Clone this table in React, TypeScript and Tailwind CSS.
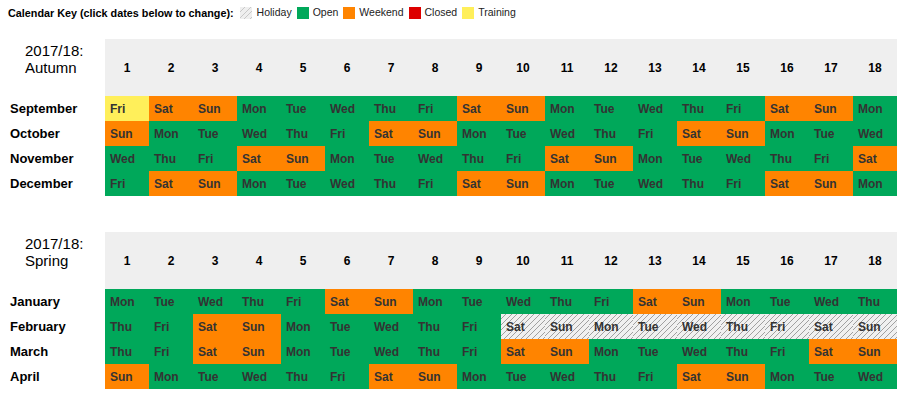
const DAYS = ['Sun', 'Mon', 'Tue', 'Wed', 'Thu', 'Fri', 'Sat']

type Status = 'open' | 'weekend' | 'holiday' | 'closed' | 'training'

const statusClass: Record<Status, string> = {
  open: 'bg-[#00a85a]',
  weekend: 'bg-[#ff8400]',
  closed: 'bg-[#dd0000]',
  training: 'bg-[#ffef5a]',
  holiday:
    'bg-[#f0f0f0] bg-[image:repeating-linear-gradient(135deg,#f0f0f0_0px,#f0f0f0_3.2px,#a0a0a0_3.2px,#a0a0a0_4px)]',
}

interface Term {
  title: string
  season: string
  months: { name: string; year: number; month: number }[]
}

const terms: Term[] = [
  {
    title: '2017/18:',
    season: 'Autumn',
    months: [
      { name: 'September', year: 2017, month: 8 },
      { name: 'October', year: 2017, month: 9 },
      { name: 'November', year: 2017, month: 10 },
      { name: 'December', year: 2017, month: 11 },
    ],
  },
  {
    title: '2017/18:',
    season: 'Spring',
    months: [
      { name: 'January', year: 2018, month: 0 },
      { name: 'February', year: 2018, month: 1 },
      { name: 'March', year: 2018, month: 2 },
      { name: 'April', year: 2018, month: 3 },
    ],
  },
]

const dates = Array.from({ length: 18 }, (_, i) => i + 1)

// a few hand-set days, the rest follow the weekday
const getStatus = (year: number, month: number, d: number): Status => {
  if (year === 2017 && month === 8 && d === 1) return 'training'
  if (year === 2018 && month === 1 && d >= 10) return 'holiday'
  const wd = new Date(year, month, d).getDay()
  return wd === 0 || wd === 6 ? 'weekend' : 'open'
}

const Swatch = ({ status }: { status: Status }) => (
  <span className={`inline-block w-[12px] h-[12px] ${statusClass[status]}`} />
)

const Legend = () => (
  <div className="flex items-center h-[26px] pl-[8px] text-[10.5px] text-[#222]">
    <span className="font-bold text-black text-[10.8px] mr-[6px]">Calendar Key (click dates below to change):</span>
    <span className="inline-block w-[12px] h-[12px] bg-[#efefef] bg-[image:repeating-linear-gradient(135deg,#efefef_0px,#efefef_3.2px,#c8c8c8_3.2px,#c8c8c8_4px)]" />
    <span className="ml-[5px] mr-[5px]">Holiday</span>
    <Swatch status="open" />
    <span className="ml-[4px] mr-[5px]">Open</span>
    <Swatch status="weekend" />
    <span className="ml-[4px] mr-[5px]">Weekend</span>
    <Swatch status="closed" />
    <span className="ml-[4px] mr-[5px]">Closed</span>
    <Swatch status="training" />
    <span className="ml-[4px]">Training</span>
  </div>
)

const TermTable = ({ term }: { term: Term }) => (
  <div className="grid grid-cols-[105px_repeat(18,44px)]">
    <div className="h-[57px] pl-[25px] pt-[3px] text-[15px] leading-[17px] text-black">
      <div>{term.title}</div>
      <div>{term.season}</div>
    </div>
    {dates.map((d) => (
      <div
        key={d}
        className="h-[57px] bg-[#efefef] flex items-center justify-center text-[12px] font-bold text-black"
      >
        {d}
      </div>
    ))}
    {term.months.map((m) => (
      <div key={m.name} className="contents">
        <div className="h-[25px] flex items-center pl-[10px] text-[13px] font-bold text-black">{m.name}</div>
        {dates.map((d) => {
          const st = getStatus(m.year, m.month, d)
          return (
            <div
              key={d}
              className={`h-[25px] flex items-center pl-[5px] text-[12px] font-bold text-[#333] cursor-pointer ${statusClass[st]}`}
            >
              {DAYS[new Date(m.year, m.month, d).getDay()]}
            </div>
          )
        })}
      </div>
    ))}
  </div>
)

export default function App() {
  return (
    <div className="w-[900px] h-[406px] bg-white font-['Liberation_Sans',Arial,sans-serif]">
      <Legend />
      <div className="pt-[13px]">
        <TermTable term={terms[0]} />
      </div>
      <div className="pt-[36px]">
        <TermTable term={terms[1]} />
      </div>
    </div>
  )
}
